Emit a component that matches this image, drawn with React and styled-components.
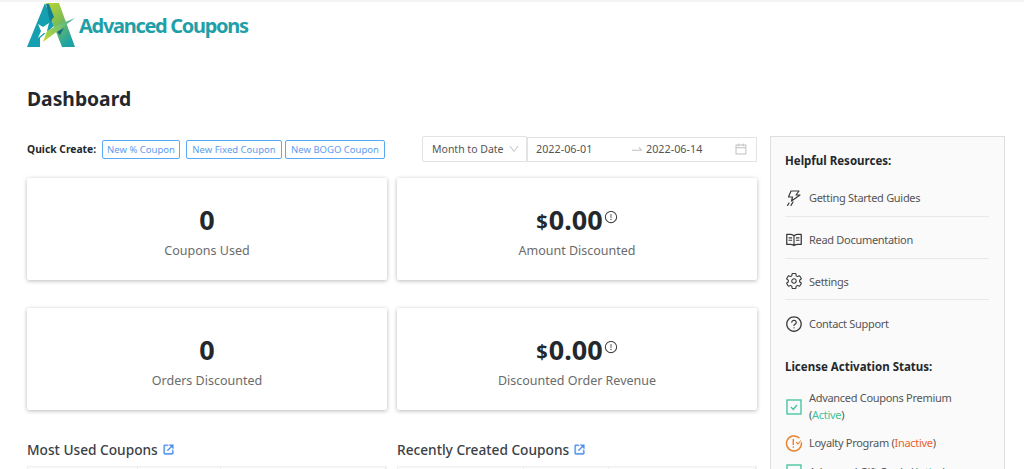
import React from "react";
import styled, { createGlobalStyle } from "styled-components";
import { AiOutlineDown, AiOutlineSwapRight, AiOutlineCalendar, AiOutlineQuestionCircle, AiOutlineExclamationCircle, AiOutlineRead } from "react-icons/ai";
import { IoSettingsOutline } from "react-icons/io5";
import { BiLinkExternal } from "react-icons/bi";

const Global = createGlobalStyle`
  html, body { margin: 0; padding: 0; background: #fff; }
  * { box-sizing: border-box; }
`;
const Page = styled.div`
  width: 1024px; height: 469px; overflow: hidden; background: #fff;
  font-family: "Noto Sans", "Open Sans", sans-serif; color: #2c2c2c;
  border-top: 2px solid #f4f4f4;
  padding: 0 20px 0 27px;
`;
const LogoRow = styled.header`
  display: flex; align-items: flex-start; height: 47px; gap: 1px;
`;
const LogoText = styled.span`
  font-family: "Noto Sans", sans-serif; font-weight: 700; font-size: 20px; line-height: 24px; color: #1f9fa8;
  margin-top: 12px; letter-spacing: -1.3px; white-space: nowrap;
`;
const Title = styled.h1`
  margin: 36px 0 0; font-size: 19.3px; line-height: 28px; font-weight: 700; color: #23282d;
`;
const Main = styled.div`
  display: grid; grid-template-columns: 730px 235px; column-gap: 13px; margin-top: 23px;
`;
const Left = styled.div`display: flex; flex-direction: column;`;
const Toolbar = styled.div`display: flex; align-items: center; height: 26px;`;
const QuickLabel = styled.span`
  font-size: 10.3px; font-weight: 700; color: #23282d; width: 75px; white-space: nowrap;
`;
const QuickButton = styled.button`
  height: 19px; padding: 0; width: ${p => p.$w}px; margin-right: ${p => p.$mr}px; background: #fff;
  border: 1px solid #5aa9f5; border-radius: 2px; color: #5b9df0; font: 400 9.5px "Noto Sans", sans-serif; white-space: nowrap;
`;
const DateGroup = styled.div`display: flex; margin-left: auto; height: 26px;`;
const PeriodSelect = styled.div`
  width: 105px; border: 1px solid #e3e3e3; display: flex; align-items: center; justify-content: space-between;
  padding: 0 6px 0 9px; font-size: 10.5px; color: #555; background: #fff; border-radius: 2px 0 0 2px;
  svg { color: #c6c6c6; font-size: 12px; }
`;
const RangeBox = styled.div`
  width: 230px; height: 25px; margin-top: 1px; border: 1px solid #e3e3e3; display: flex; align-items: center;
  padding: 0 8px 2px 8px; font-size: 10.8px; color: #555; background: #fff;
  svg { color: #c0c0c0; font-size: 14px; }
`;
const RangeDate = styled.span`width: ${p => p.$w}px;`;
const RangeArrow = styled.span`display: flex; width: 18px; font-size: 12px; justify-content: center;`;
const CardGrid = styled.div`
  display: grid; grid-template-columns: 360px 360px; column-gap: 10px; row-gap: 28px; margin-top: 16px;
`;
const Card = styled.div`
  height: 102px; background: #fff; border-radius: 2px; box-shadow: 0 1px 4px rgba(0,0,0,.28);
  display: flex; flex-direction: column; align-items: center; padding-top: 24px;
`;
const Value = styled.div`
  display: flex; align-items: flex-start; height: 35px; font-size: 27px; line-height: 35px; font-weight: 700; color: #23282d;
`;
const Currency = styled.span`font-size: 20px; line-height: 40px; margin-right: 1px;`;
const InfoWrap = styled.span`
  font-size: 14px; line-height: 1; color: #444; margin: 8px 0 0 1px; display: flex;
`;
const CardLabel = styled.div`font-size: 12.5px; line-height: 17px; color: #6b6b6b; margin-top: 5px;`;
const Sections = styled.div`
  display: grid; grid-template-columns: 360px 360px; column-gap: 10px; margin-top: 30px;
`;
const SectionTitle = styled.h2`
  margin: 0; font-size: 13.7px; line-height: 19px; font-weight: 500; color: #3b4046; display: flex; align-items: center; gap: 4px;
  svg { color: #4f8fee; font-size: 13px; stroke: currentColor; stroke-width: .7; }
`;
const TableHead = styled.div`
  display: grid; grid-template-columns: ${p => p.$cols}; height: 30px; margin-top: 7px;
  background: #fafafa; border: 1px solid #f0f0f0;
  span { border-right: 1px solid #ececec; }
`;
const Side = styled.aside`
  height: 360px; background: #fafafa; border: 1px solid #dedede; padding: 15px 15px 0 14px;
`;
const SideHeading = styled.h3`
  margin: 0; font-size: 11.5px; line-height: 18px; font-weight: 700; color: #23282d;
`;
const ResourceList = styled.div`margin-top: 5px;`;
const ResourceRow = styled.div`
  height: ${p => p.$h}px; padding-top: 4px; display: flex; align-items: center; gap: 6px; font-size: 11px; letter-spacing: -.3px; color: #555;
  border-bottom: ${p => (p.$last ? "none" : "1px solid #e8e8e8")};
  svg { flex: none; width: 18px; height: 18px; color: #3a3a3a; }
`;
const LicenseHeading = styled(SideHeading)`margin-top: 15px;`;
const LicenseList = styled.div`
  margin-top: 14px; display: flex; flex-direction: column; gap: 11px;
`;
const LicenseRow = styled.div`
  display: flex; align-items: center; gap: 6px; font-size: 11px; letter-spacing: -.3px; line-height: 16.5px; color: #555;
  svg { flex: none; width: 18px; height: 18px; }
`;
const Status = styled.span`color: ${p => p.$color};`;

const Mark = () => (
  <svg width="51" height="46" viewBox="27 2 51 46" style={{ flex: "none" }}>
    <defs>
      <linearGradient id="rl" x1="0" y1="0" x2="0.6" y2="1">
        <stop offset="0" stopColor="#bdd62f" />
        <stop offset="0.5" stopColor="#7dbd55" />
        <stop offset="1" stopColor="#1da3a5" />
      </linearGradient>
      <linearGradient id="sw" x1="0" y1="1" x2="1" y2="0">
        <stop offset="0" stopColor="#c6dc2c" />
        <stop offset="1" stopColor="#3fb0a0" />
      </linearGradient>
    </defs>
    <polygon points="27,47 45,3 54,26 40,38 40,47" fill="#159fb0" />
    <polygon points="46,3 59,3 75,47 62,47 53,24" fill="url(#rl)" />
    <polygon points="46,4 49,4 54,17 50,22" fill="#0f7f96" />
    <polygon points="38,24 43,27 49,23 47,31 50,34 44,33 38,38 41,31" fill="#fff" />
    <polygon points="75,18 58,25 47,31 43,42 55,33" fill="url(#sw)" />
    <polygon points="57,32 64,28 60,35" fill="#13698a" />
  </svg>
);
const Bolt = () => (
  <svg viewBox="0 0 18 18" fill="none" stroke="currentColor" strokeWidth="1.2" strokeLinejoin="round">
    <path d="M6 2h8l-3 4h4L6.5 12l1-4H3.5z" />
    <path d="M4 14l-1.4 2.4M8 13l-2 3.4" strokeLinecap="round" />
  </svg>
);
const CheckBox = () => (
  <svg viewBox="0 0 18 18" fill="none" stroke="#3fc39a" strokeWidth="1.3">
    <rect x="2" y="2" width="14" height="14" />
    <path d="M6 9l2.2 2.4L12 7" />
  </svg>
);
const Warn = () => (
  <svg viewBox="0 0 18 18" fill="none" stroke="#e8832f" strokeWidth="1.5" strokeLinecap="round">
    <path d="M14 3.8A7.5 7.5 0 1 0 16.5 9" />
    <path d="M8.3 5.5v5M8.3 13v.2" />
    <path d="M11.5 8.5l1.5 1.5 2.5-3" strokeWidth="1.1" />
  </svg>
);

const CARDS = [
  { value: "0", label: "Coupons Used" },
  { value: "0.00", money: true, label: "Amount Discounted" },
  { value: "0", label: "Orders Discounted" },
  { value: "0.00", money: true, label: "Discounted Order Revenue" },
];

export default function App() {
  return (
    <Page>
      <Global />
      <LogoRow>
        <Mark />
        <LogoText>Advanced Coupons</LogoText>
      </LogoRow>
      <Title>Dashboard</Title>
      <Main>
        <Left>
          <Toolbar>
            <QuickLabel>Quick Create:</QuickLabel>
            <QuickButton $w={78} $mr={6}>New % Coupon</QuickButton>
            <QuickButton $w={96} $mr={3}>New Fixed Coupon</QuickButton>
            <QuickButton $w={100} $mr={0}>New BOGO Coupon</QuickButton>
            <DateGroup>
              <PeriodSelect>Month to Date <AiOutlineDown /></PeriodSelect>
              <RangeBox>
                <RangeDate $w={93}>2022-06-01</RangeDate>
                <RangeArrow><AiOutlineSwapRight /></RangeArrow>
                <RangeDate $w={89}>2022-06-14</RangeDate>
                <AiOutlineCalendar />
              </RangeBox>
            </DateGroup>
          </Toolbar>
          <CardGrid>
            {CARDS.map(c => (
              <Card key={c.label}>
                <Value>
                  {c.money && <Currency>$</Currency>}
                  {c.value}
                  {c.money && <InfoWrap><AiOutlineExclamationCircle /></InfoWrap>}
                </Value>
                <CardLabel>{c.label}</CardLabel>
              </Card>
            ))}
          </CardGrid>
          <Sections>
            <div>
              <SectionTitle>Most Used Coupons <BiLinkExternal /></SectionTitle>
              <TableHead $cols="110px 83px 1fr"><span /><span /><span /></TableHead>
            </div>
            <div>
              <SectionTitle>Recently Created Coupons <BiLinkExternal /></SectionTitle>
              <TableHead $cols="126px 85px 1fr"><span /><span /><span /></TableHead>
            </div>
          </Sections>
        </Left>
        <Side>
          <SideHeading>Helpful Resources:</SideHeading>
          <ResourceList>
            <ResourceRow $h={42}><Bolt />Getting Started Guides</ResourceRow>
            <ResourceRow $h={42}><AiOutlineRead />Read Documentation</ResourceRow>
            <ResourceRow $h={41}><IoSettingsOutline />Settings</ResourceRow>
            <ResourceRow $h={43} $last><AiOutlineQuestionCircle />Contact Support</ResourceRow>
          </ResourceList>
          <LicenseHeading>License Activation Status:</LicenseHeading>
          <LicenseList>
            <LicenseRow><CheckBox /><span>Advanced Coupons Premium (<Status $color="#3fc39a">Active</Status>)</span></LicenseRow>
            <LicenseRow><Warn /><span>Loyalty Program (<Status $color="#e8632f">Inactive</Status>)</span></LicenseRow>
            <LicenseRow><CheckBox /><span>Advanced Gift Cards (<Status $color="#3fc39a">Active</Status>)</span></LicenseRow>
          </LicenseList>
        </Side>
      </Main>
    </Page>
  );
}
